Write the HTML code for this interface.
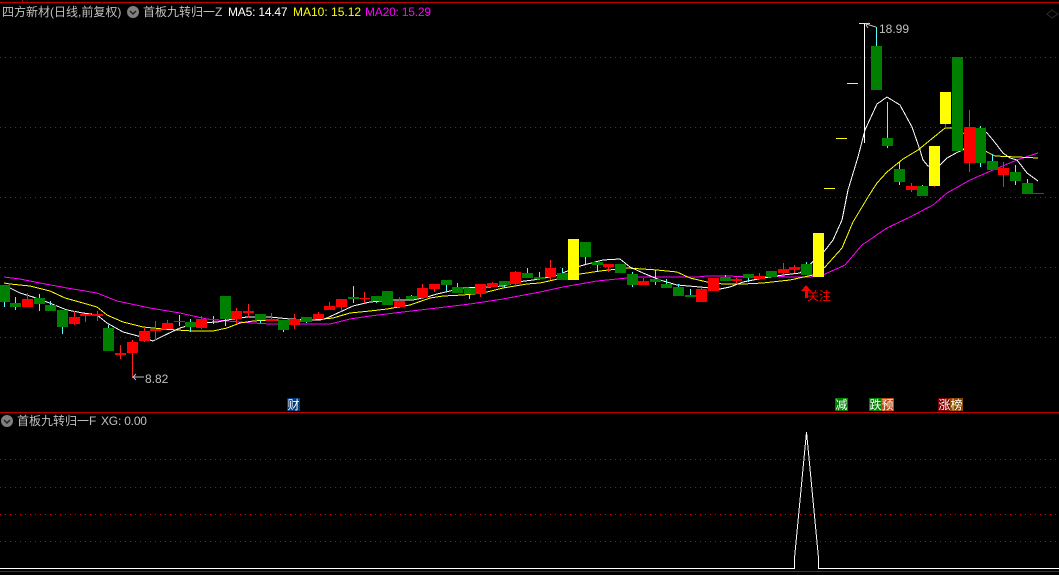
<!DOCTYPE html>
<html><head><meta charset="utf-8"><style>
html,body{margin:0;padding:0;background:#000;width:1059px;height:575px;overflow:hidden}
svg{position:absolute;left:0;top:0}
.t{position:absolute;font:12px/14px "Liberation Sans","WenQuanYi Zen Hei","Noto Sans CJK SC",sans-serif;white-space:nowrap;color:#c0c0c0}
.b{position:absolute;width:13px;height:13px;top:398px;font:12px/13px "WenQuanYi Zen Hei","Noto Sans CJK SC",sans-serif;color:#fff;text-align:center}
</style></head><body>
<svg width="1059" height="575" viewBox="0 0 1059 575" xmlns="http://www.w3.org/2000/svg">
<g shape-rendering="crispEdges" fill="none">
<path d="M0 2.5H1059M0 412.5H1059" stroke="#c00000"/>
<path d="M22.5 0V2" stroke="#c00000"/>
<path d="M0 571.5H1059" stroke="#c00000"/>
<path d="M0 57.5H1059M0 127.5H1059M0 197.5H1059M0 267.5H1059M0 337.5H1059M0 459.5H1059M0 487.5H1059M0 514.5H1059M0 541.5H1059" stroke="#d00000" stroke-dasharray="1 4"/>
</g>
<g fill="none" stroke-width="1" shape-rendering="crispEdges">
<polyline stroke="#ff00ff" points="4,277 20,279 40,283 67,288 97,293 117,301 150,308 180,313 207,319 227,321 253,323 270,324 330,324 350,319 370,316 403,312 437,308 470,304 503,299 540,292 563,287 597,281 627,278 637,277 697,277 707,276 810,277 823,275 845,265 862,245 887,228 910,217 933,205 947,193 970,180 993,170 1017,160 1038,153"/>
<polyline stroke="#ffff00" points="4,283 10,284 30,286 50,291 65,298 83,303 97,307 107,315 123,322 143,327 163,329 177,330 193,331 213,331 227,328 240,323 253,321 270,320 303,321 333,318 350,313 370,311 387,309 410,305 430,298 443,296 463,295 483,293 503,288 527,284 540,283 580,274 600,271 627,268 657,270 677,272 690,278 707,282 723,284 743,284 763,283 790,280 813,275 825,267 842,248 853,222 868,197 877,183 887,172 903,159 918,150 945,128 957,128 987,152 995,156 1017,157 1038,158"/>
<polyline stroke="#ffffff" points="8,287 20,293 33,297 47,302 67,310 83,313 97,315 107,323 123,332 138,336 153,341 163,336 180,328 197,323 217,322 233,319 247,317 270,317 290,319 313,320 320,320 327,318 340,312 353,306 370,302 393,300 413,300 427,297 437,294 450,291 463,288 487,287 503,286 517,282 533,280 555,276 580,266 603,260 620,259 630,267 643,273 660,280 677,285 700,287 720,289 730,287 743,282 763,278 783,275 800,273 823,253 833,240 842,220 848,190 858,157 865,130 877,104 887,97 900,105 912,127 920,150 923,160 928,166 940,165 947,158 958,152 963,150 980,128 987,133 993,140 1003,153 1010,158 1017,160 1027,173 1038,181"/>
</g>
<g shape-rendering="crispEdges">
<path fill="none" stroke="#ff2020" d="M27.5 293V299M74.5 311V325M85.5 316V322M97.5 311V321M120.5 345V359M132.5 340V378M144.5 327V342M155.5 321V340M167.5 320V323M201.5 316V329M236.5 308V324M248.5 304V318M271.5 313V321M294.5 314V329M318.5 312V314M329.5 302V306M341.5 307V311M364.5 292V303M399.5 297V301M422.5 284V288M434.5 289V292M480.5 294V297M492.5 282V283M515.5 271V285M550.5 260V280M608.5 267V272M643.5 278V281M701.5 288V289M736.5 278V283M759.5 273V276M783.5 263V274M794.5 265V273M911.5 183V192M969.5 110V172M1003.5 162V187M934.5 186V187M945.5 124V128"/>
<path fill="none" stroke="#54ffff" d="M4.5 302V307M15.5 297V310M39.5 294V311M50.5 301V305M62.5 327V334M108.5 325V328M179.5 315V326M190.5 319V332M213.5 316V324M225.5 319V326M260.5 320V323M283.5 330V332M306.5 322V323M353.5 286V303M376.5 301V303M411.5 295V296M446.5 285V291M457.5 283V287M469.5 287V299M504.5 285V288M527.5 268V273M539.5 272V277M562.5 268V273M585.5 257V264M597.5 265V271M632.5 272V287M655.5 270V285M666.5 279V284M678.5 284V287M690.5 289V295M725.5 275V277M748.5 278V282M806.5 262V264M876.5 27V46M887.5 102V148M899.5 162V185M922.5 185V186M980.5 126V167M992.5 154V161M1015.5 165V185M1027.5 179V183"/>
<path fill="none" stroke="#ffffff" d="M864.5 23V143"/>
<path fill="#ff0000" d="M22 299h11v8h-11zM69 317h11v7h-11zM80 314h11v2h-11zM92 314h11v2h-11zM115 353h11v2h-11zM127 342h11v11h-11zM139 331h11v10h-11zM150 329h11v2h-11zM162 323h11v6h-11zM196 319h11v9h-11zM231 311h11v8h-11zM243 311h11v2h-11zM266 319h11v2h-11zM289 319h11v6h-11zM313 314h11v5h-11zM324 306h11v4h-11zM336 299h11v8h-11zM359 298h11v1h-11zM394 301h11v6h-11zM417 288h11v10h-11zM429 284h11v5h-11zM475 284h11v10h-11zM487 283h11v4h-11zM510 272h11v12h-11zM545 268h11v9h-11zM603 264h11v3h-11zM638 281h11v4h-11zM696 289h11v13h-11zM708 278h11v13h-11zM731 279h11v2h-11zM754 276h11v3h-11zM778 269h11v4h-11zM789 267h11v3h-11zM906 186h11v4h-11zM964 127h11v36h-11zM998 168h11v7h-11z"/>
<path fill="#008000" d="M0 285h10v17h-10zM10 303h11v4h-11zM34 298h11v6h-11zM45 305h11v6h-11zM57 310h11v17h-11zM103 328h11v23h-11zM174 321h11v1h-11zM185 322h11v5h-11zM208 319h11v1h-11zM220 296h11v23h-11zM255 314h11v6h-11zM278 320h11v10h-11zM301 317h11v5h-11zM348 297h11v2h-11zM371 296h11v5h-11zM382 291h11v14h-11zM406 296h11v3h-11zM441 280h11v5h-11zM452 287h11v6h-11zM464 288h11v6h-11zM499 281h11v4h-11zM522 273h11v5h-11zM534 277h11v2h-11zM557 273h11v7h-11zM580 242h11v15h-11zM592 262h11v3h-11zM615 264h11v9h-11zM627 274h11v11h-11zM650 279h11v3h-11zM661 284h11v4h-11zM673 287h11v9h-11zM685 295h11v2h-11zM720 277h11v4h-11zM743 274h11v4h-11zM766 271h11v6h-11zM801 264h11v11h-11zM871 46h11v44h-11zM882 138h11v8h-11zM894 169h11v13h-11zM917 186h11v10h-11zM952 57h11v94h-11zM975 128h11v35h-11zM987 161h11v9h-11zM1010 172h11v9h-11zM1022 183h11v11h-11zM1033 193h11v1h-11z"/>
<path fill="#ffff00" d="M568 239h11v41h-11zM813 233h11v44h-11zM929 146h11v40h-11zM940 92h11v32h-11zM824 188h11v1h-11zM836 138h11v1h-11zM847 83h11v1h-11zM859 23h11v1h-11z"/>
</g>
<path fill="none" stroke="#c0c0c0" d="M133 377H144M136 374L133 377L136 380M866 24L876 27M869 23L866 25L868 28"/>
<path fill="#ff0000" shape-rendering="crispEdges" d="M806 285L811 291H808V298H805V291H801Z"/>
<path fill="none" stroke="#2c2c2c" d="M1052 10L1058 14L1052 18L1047 14Z"/>
<path fill="none" stroke="#ffffff" shape-rendering="crispEdges" d="M0 568.5H794.500V558L806.500 432L818.500 558V568.500H1059"/>
<circle cx="133" cy="12" r="6" fill="#808080"/><path d="M130 11L133 14L136 11" fill="none" stroke="#222" stroke-width="1.500"/>
<circle cx="7" cy="421" r="6" fill="#808080"/><path d="M4 420L7 423L10 420" fill="none" stroke="#222" stroke-width="1.500"/>
</svg>
<div class="t" style="left:2px;top:5px">四方新材(日线,前复权)</div>
<div class="t" style="left:143px;top:5px">首板九转归一Z</div>
<div class="t" style="left:228px;top:5px;color:#fff;letter-spacing:-.2px">MA5: 14.47</div>
<div class="t" style="left:293px;top:5px;color:#ff0">MA10: 15.12</div>
<div class="t" style="left:365px;top:5px;color:#f0f;letter-spacing:-.2px">MA20: 15.29</div>
<div class="t" style="left:17px;top:414px">首板九转归一F</div>
<div class="t" style="left:101px;top:414px;letter-spacing:-.2px">XG: 0.00</div>
<div class="t" style="left:145px;top:372px">8.82</div>
<div class="t" style="left:879px;top:22px">18.99</div>
<div class="t" style="left:807px;top:289px;color:#f00">关注</div>
<div class="b" style="left:287px;background:#003c78">财</div>
<div class="b" style="left:835px;background:#008000">减</div>
<div class="b" style="left:869px;background:#008000">跌</div>
<div class="b" style="left:881px;background:#b84a10">预</div>
<div class="b" style="left:938px;background:#800000">涨</div>
<div class="b" style="left:950px;background:#8a4a00">榜</div>
</body></html>
